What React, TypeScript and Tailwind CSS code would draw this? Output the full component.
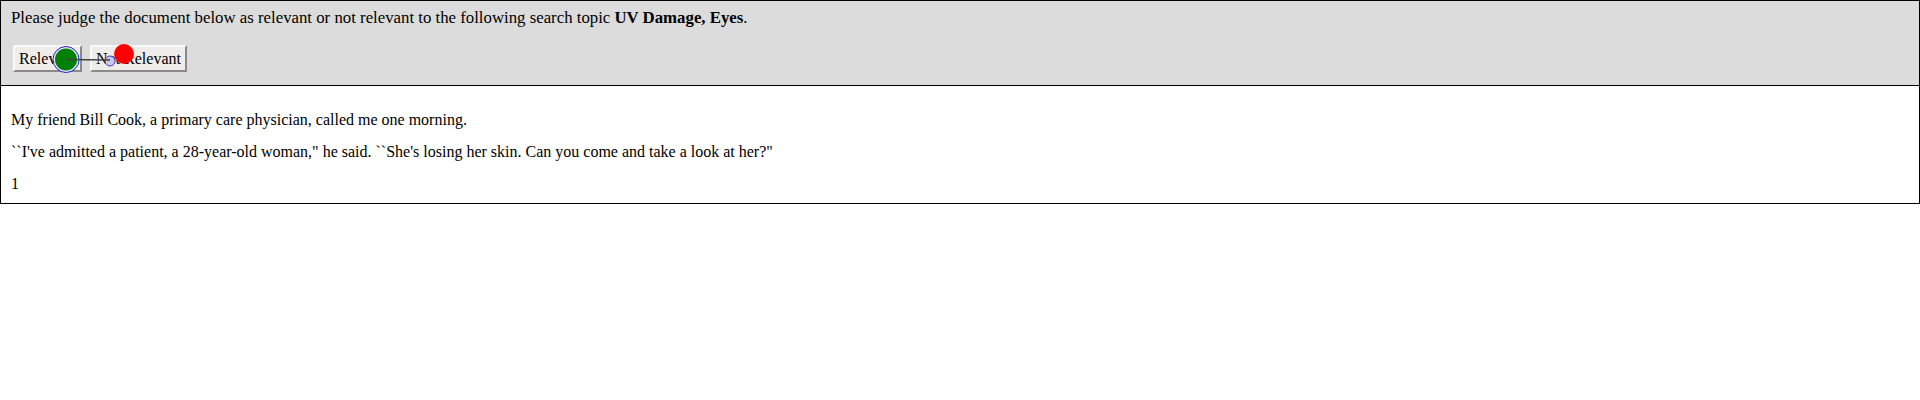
import React from 'react';

const serif = { fontFamily: '"Liberation Serif", "Times New Roman", serif' };

const Gaze = () => (
  <svg className="absolute left-0 top-0 pointer-events-none" width="200" height="85" viewBox="0 0 200 85">
    <circle cx="65" cy="58.5" r="13" fill="#e6e6f5" stroke="#2020c8" strokeWidth="1" />
    <circle cx="65" cy="58.5" r="11" fill="#008000" />
    <circle cx="109" cy="60" r="5" fill="#c8c8f0" stroke="#4040d0" strokeWidth="1" />
    <line x1="65" y1="58.5" x2="109" y2="59" stroke="#444" strokeWidth="1.5" />
    <circle cx="123" cy="53" r="10" fill="#ff0000" />
  </svg>
);

const JudgeButton = ({ label, w }: { label: string; w: string }) => (
  <button
    className={`h-[27px] ${w} bg-[#efedea] text-black text-[16px] border-2 border-t-[#fafafa] border-l-[#fafafa] border-r-[#8a8a8a] border-b-[#8a8a8a] flex items-center justify-center`}
    style={serif}
  >
    {label}
  </button>
);

export default function App() {
  const paragraphs = [
    'My friend Bill Cook, a primary care physician, called me one morning.',
    "``I've admitted a patient, a 28-year-old woman,'' he said. ``She's losing her skin. Can you come and take a look at her?''",
    '1',
  ];

  return (
    <div className="w-[1920px] h-[400px] bg-white text-black text-[16px]" style={serif}>
      <div className="border border-black">
        <div className="relative bg-[#dcdcdc] border-b border-black pt-[8px] pb-[13px] px-[10px]">
          <p className="leading-[18px] text-[16.8px]">
            Please judge the document below as relevant or not relevant to the following search topic{' '}
            <b>UV Damage, Eyes</b>.
          </p>
          <div className="flex gap-[8px] mt-[18px] ml-[2px]">
            <JudgeButton label="Relevant" w="w-[69px]" />
            <JudgeButton label="Not Relevant" w="w-[97px]" />
          </div>
          <Gaze />
        </div>
        <div className="flex flex-col gap-[14px] pt-[25px] pb-[10px] px-[10px]">
          {paragraphs.map((t, i) => (
            <p key={i} className="leading-[18px]">
              {t.replace(/''/g, '"')}
            </p>
          ))}
        </div>
      </div>
    </div>
  );
}
